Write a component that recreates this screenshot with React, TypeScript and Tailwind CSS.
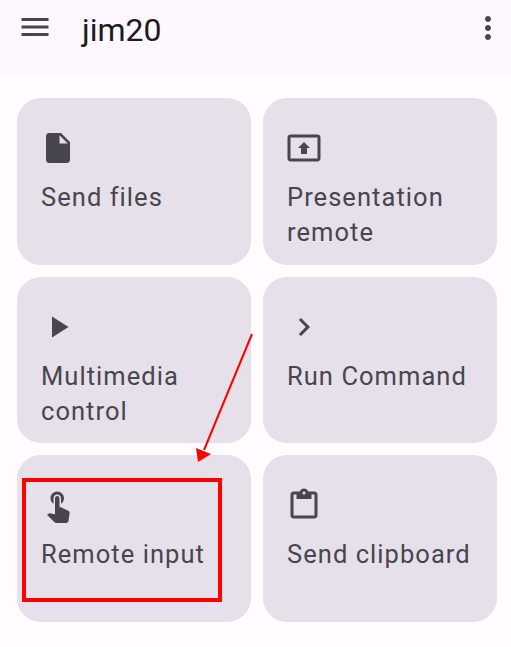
const iconPaths = {
  menu: 'M3 18h18v-2H3v2zm0-5h18v-2H3v2zm0-7v2h18V6H3z',
  more: 'M12 8c1.1 0 2-.9 2-2s-.9-2-2-2-2 .9-2 2 .9 2 2 2zm0 2c-1.1 0-2 .9-2 2s.9 2 2 2 2-.9 2-2-.9-2-2-2zm0 6c-1.1 0-2 .9-2 2s.9 2 2 2 2-.9 2-2-.9-2-2-2z',
  file: 'M6 2c-1.1 0-1.99.9-1.99 2L4 20c0 1.1.89 2 1.99 2H18c1.1 0 2-.9 2-2V8l-6-6H6zm7 7V3.5L18.5 9H13z',
  present: 'M21 3H3c-1.11 0-2 .89-2 2v14c0 1.11.89 2 2 2h18c1.11 0 2-.89 2-2V5c0-1.11-.89-2-2-2zm0 16.02H3V4.98h18v14.04zM10 12H8l4-4 4 4h-2v4h-4v-4z',
  play: 'M8 5v14l11-7z',
  chevron: 'M10 6L8.59 7.41 13.17 12l-4.58 4.59L10 18l6-6z',
  touch: 'M9 11.24V7.5C9 6.12 10.12 5 11.5 5S14 6.12 14 7.5v3.74c1.21-.81 2-2.18 2-3.74C16 5.01 13.99 3 11.5 3S7 5.01 7 7.5c0 1.56.79 2.93 2 3.74zm9.84 4.63l-4.54-2.26c-.17-.07-.35-.11-.54-.11H13v-6c0-.83-.67-1.5-1.5-1.5S10 6.67 10 7.5v10.74l-3.43-.72c-.08-.01-.15-.03-.24-.03-.31 0-.59.13-.79.33l-.79.8 4.94 4.94c.27.27.65.44 1.06.44h6.79c.75 0 1.33-.55 1.44-1.28l.75-5.27c.01-.07.02-.14.02-.2 0-.62-.38-1.16-.91-1.38z',
  clipboard: 'M19 3h-4.18C14.4 1.84 13.3 1 12 1s-2.4.84-2.82 2H5c-1.1 0-2 .9-2 2v14c0 1.1.9 2 2 2h14c1.1 0 2-.9 2-2V5c0-1.1-.9-2-2-2zm0 16H5V5h2v3h10V5h2v14zM12 5c-.55 0-1-.45-1-1s.45-1 1-1 1 .45 1 1-.45 1-1 1z',
};

const Icon = ({ d }: { d: string }) => (
  <svg viewBox="0 0 24 24" className="w-9 h-9 shrink-0 fill-[#49454f]">
    <path d={d} />
  </svg>
);

const actions = [
  { label: 'Send files', icon: iconPaths.file },
  { label: 'Presentation remote', icon: iconPaths.present },
  { label: 'Multimedia control', icon: iconPaths.play },
  { label: 'Run Command', icon: iconPaths.chevron },
  { label: 'Remote input', icon: iconPaths.touch },
  { label: 'Send clipboard', icon: iconPaths.clipboard },
];

export default function App() {
  return (
    <div className="relative w-[511px] h-[647px] overflow-hidden bg-[#fffbff] font-['Roboto',sans-serif]">
      {/* Top app bar */}
      <header className="flex items-start h-[74px] bg-[#fef7ff] pl-[17px] pr-[5px] pt-[9px]">
        <Icon d={iconPaths.menu} />
        <h1 className="ml-[29px] text-[32px] leading-[42px] text-[#1d1b20] font-normal">jim20</h1>
        <div className="ml-auto mt-px">
          <Icon d={iconPaths.more} />
        </div>
      </header>

      {/* Action cards */}
      <div className="grid grid-cols-2 gap-3 pt-6 pl-[17px] pr-[14px]">
        {actions.map((a) => (
          <div key={a.label} className="h-[166.6px] rounded-[24px] bg-[#e5e0e9] pl-[23px] pr-4 pt-8">
            <Icon d={a.icon} />
            <p className="mt-[14px] pl-px text-[25.5px] leading-[35px] tracking-[1.05px] text-[#49454f]">{a.label}</p>
          </div>
        ))}
      </div>

      {/* Screenshot annotation */}
      <div className="absolute left-[22px] top-[478px] w-[200px] h-[124px] border-4 border-[#ff0000]" />
      <svg className="absolute inset-0 w-[511px] h-[647px] pointer-events-none" viewBox="0 0 511 647">
        <line x1="252" y1="334" x2="204" y2="450" stroke="#ff0000" strokeWidth="2" />
        <polygon points="198,462 196,448 211,454" fill="#ff0000" />
      </svg>
    </div>
  );
}
